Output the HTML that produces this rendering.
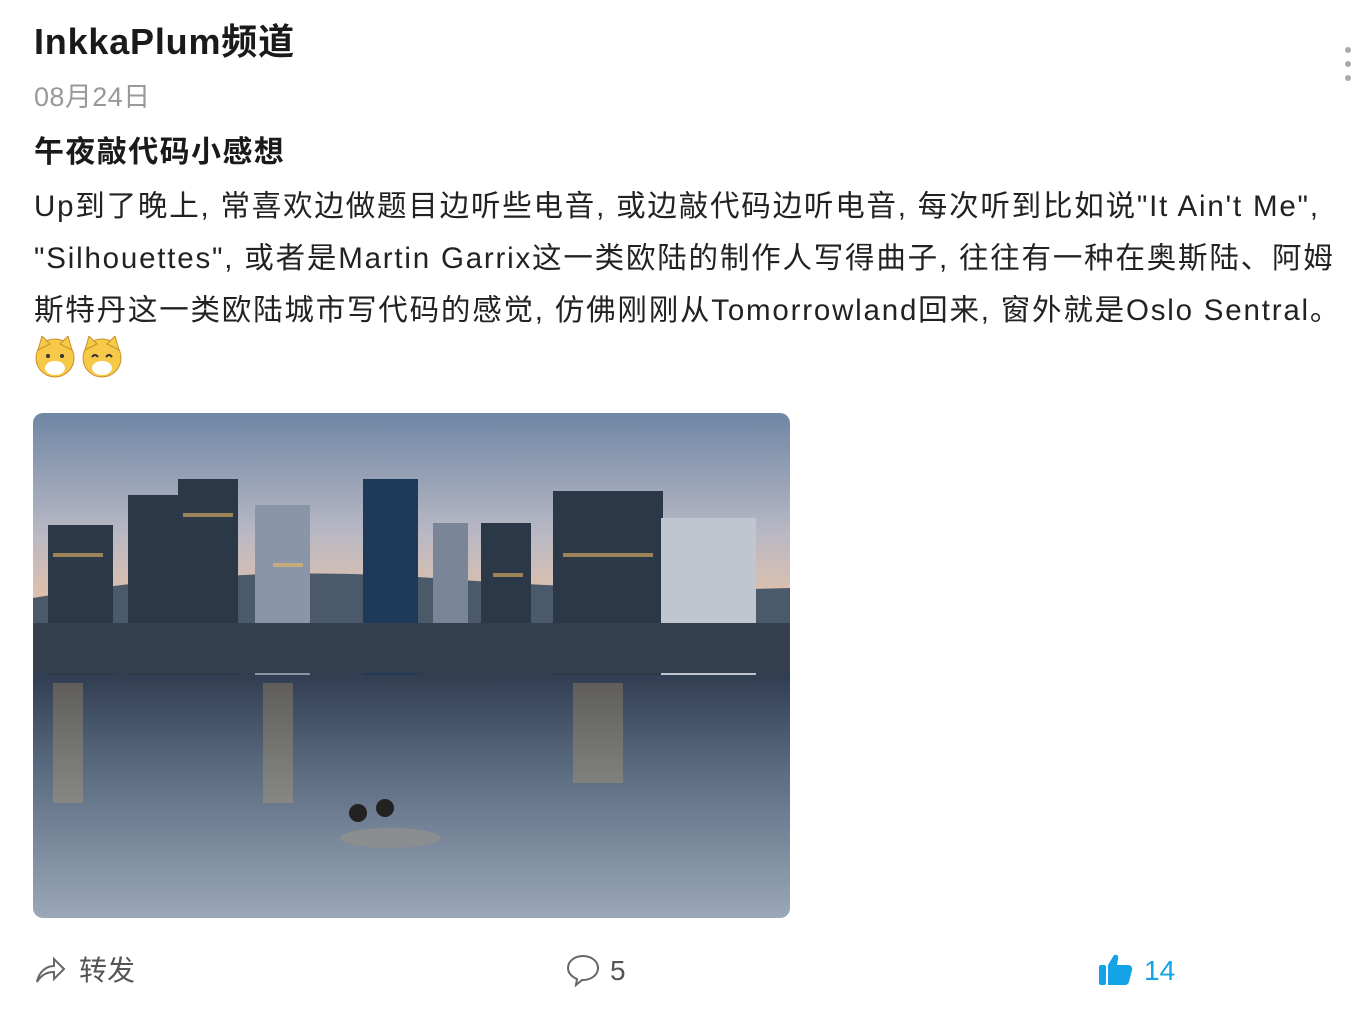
<!DOCTYPE html>
<html><head><meta charset="utf-8"><style>
body{margin:0;width:1354px;height:1022px;background:#fff;overflow:hidden;font-family:"Liberation Sans","Noto Sans CJK SC",sans-serif;color:#1a1a1a;position:relative}
.a{position:absolute;white-space:nowrap}
</style></head><body>
<div class="a" style="left:34px;top:18px;font-size:36px;font-weight:bold;line-height:48px;letter-spacing:0.8px">InkkaPlum频道</div>
<div class="a" style="left:34px;top:79px;font-size:27px;color:#999;line-height:36px;letter-spacing:0.4px">08月24日</div>
<div class="a" style="left:34px;top:133px;font-size:30px;font-weight:bold;line-height:40px;letter-spacing:1.4px">午夜敲代码小感想</div>
<div class="a" style="left:34px;top:181px;font-size:29.5px;line-height:52px;color:#222;letter-spacing:1.8px">Up到了晚上, 常喜欢边做题目边听些电音, 或边敲代码边听电音, 每次听到比如说"It Ain't Me",<br>"Silhouettes", 或者是Martin Garrix这一类欧陆的制作人写得曲子, 往往有一种在奥斯陆、阿姆<br>斯特丹这一类欧陆城市写代码的感觉, 仿佛刚刚从Tomorrowland回来, 窗外就是Oslo Sentral。</div>
<svg class="a" style="left:34px;top:336px" width="92" height="44">
<g><circle cx="21" cy="22" r="19" fill="#f7c948" stroke="#c8902a"/><polygon points="4,14 8,0 16,8" fill="#f7c948" stroke="#c8902a"/><polygon points="38,14 34,0 26,8" fill="#f7c948" stroke="#c8902a"/><ellipse cx="21" cy="32" rx="10" ry="7" fill="#fff"/><circle cx="14" cy="20" r="2" fill="#333"/><circle cx="28" cy="20" r="2" fill="#333"/></g>
<g transform="translate(47,0)"><circle cx="21" cy="22" r="19" fill="#f7c948" stroke="#c8902a"/><polygon points="4,14 8,0 16,8" fill="#f7c948" stroke="#c8902a"/><polygon points="38,14 34,0 26,8" fill="#f7c948" stroke="#c8902a"/><ellipse cx="21" cy="32" rx="10" ry="7" fill="#fff"/><path d="M11 21q3-4 6 0M25 21q3-4 6 0" stroke="#333" stroke-width="2" fill="none"/></g>
</svg>
<svg class="a" style="left:33px;top:413px" width="757" height="505">
<defs>
<clipPath id="c"><rect width="757" height="505" rx="10"/></clipPath>
<linearGradient id="s" x1="0" y1="0" x2="0" y2="1"><stop offset="0" stop-color="#6f86a5"/><stop offset="0.6" stop-color="#b8b8c4"/><stop offset="1" stop-color="#e8c2a6"/></linearGradient>
<linearGradient id="w" x1="0" y1="0" x2="0" y2="1"><stop offset="0" stop-color="#2e3a4e"/><stop offset="0.4" stop-color="#5a6a80"/><stop offset="1" stop-color="#9aa8b8"/></linearGradient>
</defs>
<g clip-path="url(#c)">
<rect width="757" height="200" fill="url(#s)"/>
<path d="M0 185 Q200 150 400 165 T757 175 V260 H0Z" fill="#4a5a6a"/>
<rect y="255" width="757" height="250" fill="url(#w)"/>
<g fill="#2a3848">
<rect x="15" y="112" width="65" height="150"/><rect x="95" y="82" width="55" height="180"/><rect x="145" y="66" width="60" height="196"/>
<rect x="222" y="92" width="55" height="170" fill="#8a96a8"/><rect x="330" y="66" width="55" height="196" fill="#1e3a58"/>
<rect x="400" y="110" width="35" height="150" fill="#7a8698"/><rect x="448" y="110" width="50" height="150"/>
<rect x="520" y="78" width="110" height="184"/><rect x="628" y="105" width="95" height="157" fill="#c0c6d0"/>
<rect x="0" y="210" width="757" height="50" fill="#34404e"/>
</g>
<g fill="#e9b864" opacity="0.6">
<rect x="20" y="140" width="50" height="4"/><rect x="150" y="100" width="50" height="4"/><rect x="530" y="140" width="90" height="4"/><rect x="240" y="150" width="30" height="4"/><rect x="460" y="160" width="30" height="4"/>
<rect x="20" y="270" width="30" height="120" opacity="0.4"/><rect x="230" y="270" width="30" height="120" opacity="0.4"/><rect x="540" y="270" width="50" height="100" opacity="0.4"/>
</g>
<ellipse cx="357" cy="425" rx="50" ry="10" fill="#8a8e90"/><circle cx="325" cy="400" r="9" fill="#222"/><circle cx="352" cy="395" r="9" fill="#222"/>
</g>
</svg>
<svg class="a" style="left:35px;top:955px" width="32" height="30" fill="none" stroke="#666" stroke-width="2"><path d="M2 27C4 16 12 11 19 11V4l10 10-10 10v-7C12 17 6 20 2 27Z"/></svg>
<div class="a" style="left:79px;top:953px;font-size:28px;color:#555;line-height:36px">转发</div>
<svg class="a" style="left:566px;top:953px" width="34" height="34" fill="none" stroke="#666" stroke-width="2"><path d="M17 3C9 3 2 8 2 15c0 5 4 9 9 11l-1 6 6-5h1c8 0 15-5 15-12S25 3 17 3Z"/></svg>
<div class="a" style="left:610px;top:953px;font-size:28px;color:#555;line-height:36px">5</div>
<svg class="a" style="left:1098px;top:952px" width="36" height="34" fill="#14a4e6"><rect x="1" y="13" width="7" height="20" rx="2"/><path d="M10 13l6-10c3-1 5 1 4 4l-1 6h11c3 0 5 3 4 5l-3 12c-1 2-2 3-4 3H10Z"/></svg>
<div class="a" style="left:1144px;top:953px;font-size:28px;color:#14a4e6;line-height:36px">14</div>
<svg class="a" style="left:1343px;top:45px" width="10" height="40" fill="#aaa"><circle cx="5" cy="5" r="3"/><circle cx="5" cy="19" r="3"/><circle cx="5" cy="33" r="3"/></svg>
</body></html>
